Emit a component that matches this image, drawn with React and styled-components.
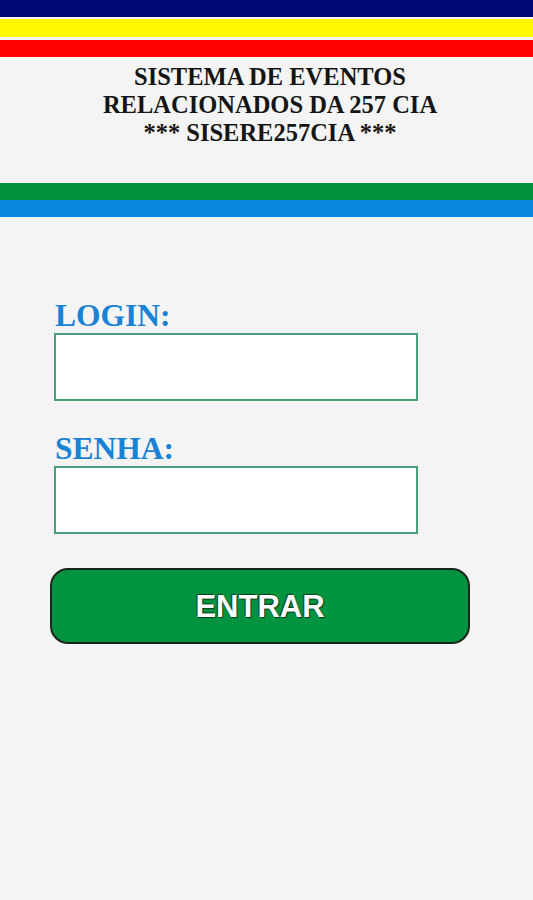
import React from 'react';
import styled, { createGlobalStyle } from 'styled-components';

const GlobalStyle = createGlobalStyle`
    html, body {
        margin: 0;
        padding: 0;
        background-color: #f4f4f4;
    }
`;

const Page = styled.div`
    width: 533px;
    min-height: 900px;
    background-color: #f4f4f4;
    display: flex;
    flex-direction: column;
`;

const Stripe = styled.div`
    width: 100%;
    height: ${props => props.h}px;
    background-color: ${props => props.color};
    margin-top: ${props => props.gap || 0}px;
`;

const Title = styled.h1`
    margin: 0;
    padding: 6px 0 0 7px;
    height: 126px;
    box-sizing: border-box;
    text-align: center;
    font-family: "Liberation Serif", "Times New Roman", serif;
    font-weight: bold;
    font-size: 24.5px;
    line-height: 28px;
    color: #151515;
`;

const Form = styled.form`
    display: flex;
    flex-direction: column;
    padding: 85px 0 0 54px;
`;

const Label = styled.label`
    font-family: "Liberation Serif", "Times New Roman", serif;
    font-weight: bold;
    font-size: 31.5px;
    line-height: 28px;
    color: #1a82d4;
    margin-left: 1px;
    margin-top: ${props => props.top || 0}px;
    margin-bottom: 3px;
`;

const Input = styled.input`
    width: 364px;
    height: 68px;
    box-sizing: border-box;
    border: 2px solid #4a9e78;
    background: #fff;
    outline: none;
    padding: 0 8px;
    font-size: 20px;
`;

const Button = styled.button`
    margin: 34px 0 0 -4px;
    width: 420px;
    height: 76px;
    border-radius: 18px;
    border: 2px solid #18261c;
    background-color: #009440;
    color: #fff;
    font-family: "Liberation Sans", Arial, sans-serif;
    font-weight: bold;
    font-size: 31px;
    padding-top: 3px;
    text-shadow: 1px 1px 1px #0b3a1c, -1px -1px 1px #0b3a1c;
    cursor: pointer;
`;

const App = () => {
    return (
        <Page>
            <GlobalStyle />
            <Stripe h={17} color="#000875" />
            <Stripe h={18} gap={2} color="#fff700" />
            <Stripe h={17} gap={3} color="#ff0000" />
            <Title>
                SISTEMA DE EVENTOS<br />
                RELACIONADOS DA 257 CIA<br />
                *** SISERE257CIA ***
            </Title>
            <Stripe h={17} color="#00913e" />
            <Stripe h={17} color="#0a86e0" />
            <Form onSubmit={e => e.preventDefault()}>
                <Label htmlFor="login">LOGIN:</Label>
                <Input id="login" type="text" />
                <Label htmlFor="senha" top={34}>SENHA:</Label>
                <Input id="senha" type="password" />
                <Button type="submit">ENTRAR</Button>
            </Form>
        </Page>
    )
}

export default App
